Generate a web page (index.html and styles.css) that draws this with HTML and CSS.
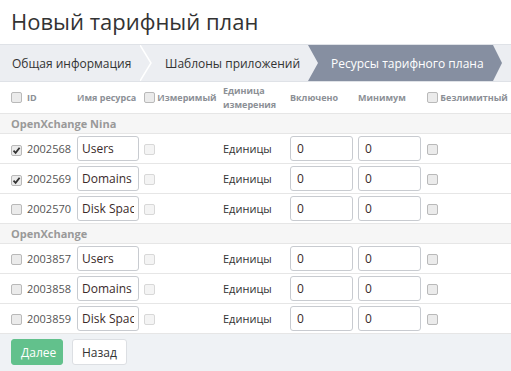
FILE: index.html
```
<!DOCTYPE html>
<html lang="ru">
<head>
  <meta charset="UTF-8" />
  <title>Новый тарифный план</title>
  <link rel="stylesheet" href="styles.css">
</head>
<body>
  <h1 class="title">Новый тарифный план</h1>

  <div class="wizard">
    <div class="step">Общая информация</div>
    <svg class="sep" width="12" height="36" viewBox="0 0 12 36"><polyline points="0,0 11,18 0,36" fill="none" stroke="#fff" stroke-width="1.5"/></svg>
    <div class="step">Шаблоны приложений</div>
    <div class="step active">Ресурсы тарифного плана</div>
  </div>

  <table class="resources">
    <colgroup>
      <col style="width:24px"><col style="width:50px"><col style="width:67px"><col style="width:79px">
      <col style="width:67px"><col style="width:68px"><col style="width:69px"><col>
    </colgroup>
    <thead>
      <tr>
        <th><span class="cb"></span></th>
        <th>ID</th>
        <th>Имя ресурса</th>
        <th><span class="cb"></span> Измеримый</th>
        <th>Единица<br>измерения</th>
        <th>Включено</th>
        <th>Минимум</th>
        <th><span class="cb"></span> Безлимитный</th>
      </tr>
    </thead>
    <tbody id="rows"></tbody>
  </table>

  <div class="footer">
    <button class="btn primary">Далее</button>
    <button class="btn">Назад</button>
  </div>

  <script>
    const groups = [
      { name: "OpenXchange Nina", items: [
        { id: 2002568, name: "Users", checked: true },
        { id: 2002569, name: "Domains", checked: true },
        { id: 2002570, name: "Disk Space", checked: false }
      ]},
      { name: "OpenXchange", items: [
        { id: 2003857, name: "Users", checked: false },
        { id: 2003858, name: "Domains", checked: false },
        { id: 2003859, name: "Disk Space", checked: false }
      ]}
    ];

    const tick = '<svg width="9" height="9" viewBox="0 0 9 9"><path d="M1.5 4.6 L3.6 6.8 L7.6 1.8" fill="none" stroke="#333" stroke-width="1.8"/></svg>';

    document.getElementById('rows').innerHTML = groups.map(g => `
      <tr class="group"><td colspan="8">${g.name}</td></tr>
      ${g.items.map(item => `
        <tr>
          <td><span class="cb">${item.checked ? tick : ''}</span></td>
          <td class="id">${item.id}</td>
          <td><input class="name" type="text" value="${item.name}"></td>
          <td><span class="cb disabled"></span></td>
          <td>Единицы</td>
          <td><input class="num" type="text" value="0"></td>
          <td><input class="num" type="text" value="0"></td>
          <td><span class="cb"></span></td>
        </tr>
      `).join('')}
    `).join('');
  </script>
</body>
</html>
```

FILE: styles.css
```
body {
  font-family: 'Open Sans', sans-serif;
  margin: 0;
  background: #fff;
  color: #333;
  font-size: 11px;
  overflow: hidden;
}
.title {
  font-size: 22px;
  font-weight: 400;
  margin: 0;
  padding: 6px 0 0 11px;
  height: 38px;
  color: #333;
}
.wizard {
  display: flex;
  height: 36px;
  background: #eceef2;
  border-top: 1px solid #dfe2e7;
  border-bottom: 1px solid #dfe2e7;
  font-size: 12px;
}
.step {
  display: flex;
  align-items: center;
  box-sizing: border-box;
  white-space: nowrap;
  padding-left: 12px;
  color: #333;
}
.step:first-child {
  width: 140px;
}
.sep {
  flex: none;
}
.step:nth-child(3) {
  width: 156px;
  padding-left: 13px;
}
.step.active {
  width: 194px;
  padding-left: 23px;
  background: #868fa1;
  color: #fff;
  clip-path: polygon(0 0, 185px 0, 194px 50%, 185px 100%, 0 100%, 10px 50%);
}
.resources {
  width: 511px;
  table-layout: fixed;
  border-collapse: collapse;
}
.resources th {
  text-align: left;
  font-size: 9px;
  font-weight: 700;
  color: #8c9096;
  height: 31px;
  padding: 0 0 0 3px;
  white-space: nowrap;
  line-height: 14px;
  border-bottom: 1px solid #e6e6e6;
}
.resources th:first-child,
.resources td:first-child {
  padding-left: 11px;
}
.resources td {
  height: 29px;
  padding: 0 0 0 3px;
  border-bottom: 1px solid #e6e6e6;
  white-space: nowrap;
  overflow: hidden;
}
.resources tr.group td {
  height: 19px;
  background: #f6f6f6;
  font-weight: 700;
  color: #999;
  font-size: 11px;
}
.resources td.id {
  color: #555;
}
.cb {
  display: inline-flex;
  align-items: center;
  justify-content: center;
  width: 9px;
  height: 9px;
  border: 1px solid #b9b9b9;
  border-radius: 2px;
  background: #ebebeb;
  vertical-align: -2px;
}
.cb.disabled {
  border-color: #d8d8d8;
  background: #f4f4f4;
}
.resources input {
  font-family: 'Open Sans', sans-serif;
  font-size: 12px;
  color: #3a2a2a;
  height: 25px;
  box-sizing: border-box;
  border: 1px solid #c8cbd0;
  border-radius: 3px;
  padding: 0 6px;
  margin: 0;
  vertical-align: middle;
}
.resources input.name {
  width: 62px;
  padding: 0 4px;
}
.resources input.num {
  width: 63px;
}
.footer {
  background: #eff2f5;
  height: 40px;
  padding: 5px 0 0 11px;
  display: flex;
  gap: 9px;
  align-items: flex-start;
  box-sizing: border-box;
}
.btn {
  font-family: 'Open Sans', sans-serif;
  font-size: 12px;
  height: 26px;
  padding: 0 9px;
  border: 1px solid #dcdfe3;
  border-radius: 3px;
  background: #fff;
  color: #333;
}
.btn.primary {
  background: #62c18c;
  border-color: #62c18c;
  color: #fff;
  width: 52px;
}
```
